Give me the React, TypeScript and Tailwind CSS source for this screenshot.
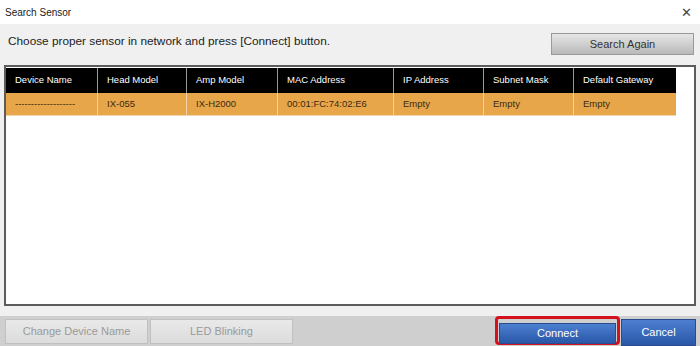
import React from "react";

const cols = [
  { name: "Device Name", w: 91, val: "-------------------" },
  { name: "Head Model", w: 89, val: "IX-055" },
  { name: "Amp Model", w: 91, val: "IX-H2000" },
  { name: "MAC Address", w: 116, val: "00:01:FC:74:02:E6" },
  { name: "IP Address", w: 90, val: "Empty" },
  { name: "Subnet Mask", w: 90, val: "Empty" },
  { name: "Default Gateway", w: 103, val: "Empty" },
];

const SearchSensor = () => {
  return (
    <div
      className="w-[700px] h-[346px] flex flex-col bg-white overflow-hidden"
      style={{ fontFamily: '"Liberation Sans", Arial, sans-serif' }}
    >
      {/* Title bar */}
      <div className="h-[24px] flex items-center justify-between pl-[5px] pr-[8px] bg-white">
        <span className="text-[10px] text-[#222]">Search Sensor</span>
        <span className="text-[13px] text-[#444] leading-none">✕</span>
      </div>

      {/* Body */}
      <div className="flex-1 flex flex-col bg-[#f0f0f0]">
        <div className="h-[41px] flex justify-between pl-[8px] pr-[6px]">
          <p className="pt-[9px] text-[11.8px] text-[#222]">
            Choose proper sensor in network and press [Connect] button.
          </p>
          <button className="mt-[9px] w-[143px] h-[22px] text-[11px] text-[#333] border border-[#9a9a9a] bg-gradient-to-b from-[#e6e6e6] to-[#b9b9b9]">
            Search Again
          </button>
        </div>

        {/* Table */}
        <div className="mx-[4px] h-[241px] border-2 border-[#5c5c5c] bg-white pt-px">
          <div className="flex bg-black text-white h-[25px] w-[670px]">
            {cols.map((c, i) => (
              <div
                key={c.name}
                className={`flex items-center pl-[9px] text-[9.5px] ${i > 0 ? "border-l border-[#999]" : ""}`}
                style={{ width: c.w }}
              >
                {c.name}
              </div>
            ))}
          </div>
          <div className="flex bg-[#e8a64a] text-[#3a2a10] h-[23px] w-[670px] border-b border-[#f3d6ab]">
            {cols.map((c, i) => (
              <div
                key={c.name}
                className={`flex items-center pl-[9px] text-[9.5px] ${i > 0 ? "border-l border-[#f3d2a0]" : ""}`}
                style={{ width: c.w }}
              >
                {c.val}
              </div>
            ))}
          </div>
        </div>

        {/* Bottom bar */}
        <div className="mt-[10px] flex-1 flex items-end bg-[#cfcfcf] pl-[5px] pr-[4px]">
          <div className="flex w-full h-[30px] items-stretch">
            <button className="w-[143px] h-[25px] mt-[3px] text-[11px] text-[#9a9a9a] border border-[#c0c0c0] bg-gradient-to-b from-[#e9e9e9] to-[#dcdcdc]">
              Change Device Name
            </button>
            <button className="ml-[2px] w-[143px] h-[25px] mt-[3px] text-[11px] text-[#9a9a9a] border border-[#c0c0c0] bg-gradient-to-b from-[#e9e9e9] to-[#dcdcdc]">
              LED Blinking
            </button>
            <div className="flex-1" />
            <div className="w-[125px] h-[29px] border-[3px] border-[#d4121e] rounded-[4px] p-px">
              <button className="w-full h-full text-[11px] text-white bg-gradient-to-b from-[#4d7fd0] to-[#2a57a8] border border-[#2a4c8e]">
                Connect
              </button>
            </div>
            <button className="ml-[1px] w-[75px] h-[27px] mt-[3px] text-[11px] text-white bg-gradient-to-b from-[#4d7fd0] to-[#2a57a8] border border-[#2a4c8e]">
              Cancel
            </button>
          </div>
        </div>
      </div>
    </div>
  );
};

export default SearchSensor;
